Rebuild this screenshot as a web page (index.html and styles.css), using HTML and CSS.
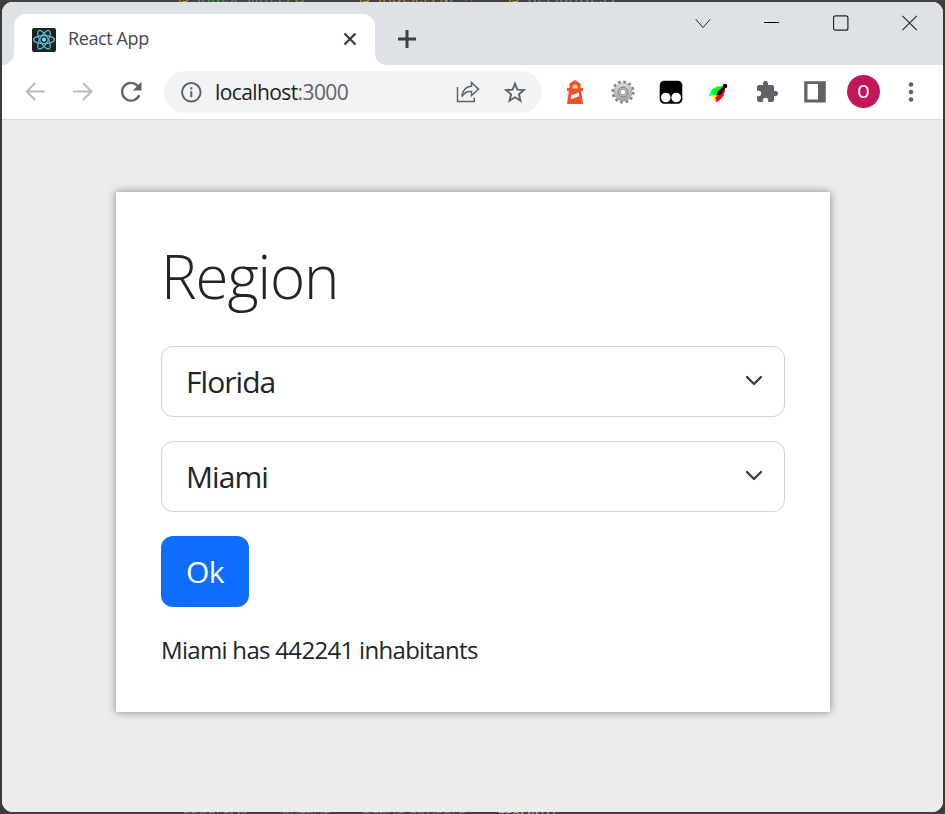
FILE: index.html
```html
<!DOCTYPE html>
<html lang="en">
<head>
<meta charset="utf-8">
<title>React App</title>
<link rel="stylesheet" href="styles.css">
</head>
<body>
<div class="backdrop backdrop-top" aria-hidden="true">
  <span class="peek js">JS</span><span class="peek green">index-slim.js U</span>
  <span class="peek js second">JS</span><span class="peek sand">index.js M</span><span class="peek light">×</span>
  <span class="peek js third">JS</span><span class="peek gray">RegionUE.js</span>
</div>
<div class="window">
  <header class="tabstrip">
    <div class="lead"></div>
    <div class="tab">
      <svg class="favicon" width="24" height="24" viewBox="0 0 24 24"><rect width="24" height="24" rx="2" fill="#222"/><g fill="none" stroke="#58c4dc" stroke-width="1.2"><ellipse cx="12" cy="11.7" rx="10.4" ry="4"/><ellipse cx="12" cy="11.7" rx="10.4" ry="4" transform="rotate(60 12 11.7)"/><ellipse cx="12" cy="11.7" rx="10.4" ry="4" transform="rotate(120 12 11.7)"/></g><circle cx="12" cy="11.7" r="2.1" fill="#61dafb"/></svg>
      <span class="tab-title">React App</span>
      <svg class="tab-close" width="14" height="14" viewBox="0 0 14 14"><path d="M1.5 1.5l11 11M12.5 1.5l-11 11" stroke="#3c4043" stroke-width="2.3"/></svg>
    </div>
    <div class="strip-rest">
      <svg class="plus" width="18" height="18" viewBox="0 0 18 18"><path d="M9 0v18M0 9h18" stroke="#3c4043" stroke-width="3"/></svg>
      <div class="controls">
        <svg width="16" height="16" viewBox="0 0 16 16"><path d="M.7 4.200L8 12.500l7.300-8.300" fill="none" stroke="#222" stroke-width="1"/></svg>
        <svg width="16" height="16" viewBox="0 0 16 16"><path d="M0 7.500h15" stroke="#000" stroke-width="1"/></svg>
        <svg width="16" height="16" viewBox="0 0 16 16"><rect x=".5" y=".8" width="14.400" height="14.400" rx="2" fill="none" stroke="#222" stroke-width="1.200"/></svg>
        <svg width="16" height="16" viewBox="0 0 16 16"><path d="M.4.800l14.400 14.400M14.800.800L.4 15.200" stroke="#222" stroke-width="1.100"/></svg>
      </div>
    </div>
  </header>
  <nav class="toolbar">
    <div class="nav-buttons">
      <svg width="22" height="22" viewBox="0 0 22 22"><path d="M20.700 10.500H3M11.200 2L2.700 10.500l8.500 8.500" fill="none" stroke="#babcbe" stroke-width="2"/></svg>
      <svg width="22" height="22" viewBox="0 0 22 22"><path d="M1 10.500h18M11 2l8.500 8.500L11 19" fill="none" stroke="#babcbe" stroke-width="2"/></svg>
      <svg width="22" height="22" viewBox="0 0 22 22"><path d="M19.200 14.300A8.900 8.900 0 1 1 17.800 5" fill="none" stroke="#5f6368" stroke-width="2.300"/><path d="M21.500.800v8.700h-8.700z" fill="#5f6368"/></svg>
    </div>
    <div class="omnibox">
      <svg width="22" height="22" viewBox="0 0 22 22"><circle cx="11.300" cy="11.300" r="9.300" fill="none" stroke="#5f6368" stroke-width="2"/><path d="M11.300 10.200v6M11.300 6.200v2.200" stroke="#5f6368" stroke-width="2"/></svg>
      <span class="url">localhost<span class="port">:3000</span></span>
      <svg class="share" width="24" height="22" viewBox="0 0 24 22"><g fill="none" stroke="#5f6368" stroke-width="1.500"><path d="M1.500 6v14.500h16.800v-4"/><path d="M15.500 1.500l7 6.600-7 6.400v-4C10.500 10 8 12 5.800 15.500 6.500 9.500 10 5.500 15.500 5.200z"/></g></svg>
      <svg class="star" width="22" height="22" viewBox="0 0 22 22"><path d="M11 2.600l2.400 6 6.500.5-5 4.200 1.600 6.400L11 16.300l-5.500 3.400 1.600-6.400-5-4.200 6.500-.5z" fill="none" stroke="#5f6368" stroke-width="1.900"/></svg>
    </div>
    <div class="extensions">
      <svg width="24" height="24" viewBox="0 0 24 24"><path d="M6.500 3.500L12 0l5.500 3.500V8H20v3h-1.800L20 24H4l1.800-13H4V8h2.500z" fill="#f4512c"/><path d="M9.500 8.500V5.800q2.500-3 5 0v2.700z" fill="#ffe082"/><path d="M8 15.500l8-3v3.800l-8 3z" fill="#fff"/></svg>
      <svg width="24" height="24" viewBox="0 0 24 24"><defs><linearGradient id="metal" x2="0" y2="1"><stop offset="0" stop-color="#dedede"/><stop offset="1" stop-color="#a0a0a0"/></linearGradient></defs><circle cx="12" cy="12" r="10.300" fill="none" stroke="#858585" stroke-width="2.600" stroke-dasharray="2.700 2.693"/><circle cx="12" cy="12" r="9" fill="url(#metal)" stroke="#999" stroke-width=".8"/><circle cx="12" cy="12" r="5" fill="#b5b5b5" stroke="#808080" stroke-width="1"/><circle cx="12" cy="12" r="2.600" fill="#fff" stroke="#888" stroke-width=".6"/></svg>
      <svg width="24" height="24" viewBox="0 0 24 24"><rect x=".7" y=".7" width="22.600" height="23" rx="4.500"/><circle cx="6.800" cy="17.500" r="4.800" fill="#fff"/><circle cx="17.200" cy="17.500" r="4.800" fill="#fff"/></svg>
      <svg width="24" height="24" viewBox="0 0 24 24"><path d="M2 15.500Q4 5 18 6L9 15z" fill="#0f0"/><path d="M2 15.500l2-5 2.500 5z" fill="#0ff"/><path d="M4.500 15H10v5H6.500z" fill="#ff0"/><path d="M8 18L18 7q.5 10-8 15z" fill="red"/><path d="M8 21l3-1.500 1.500.8L9.500 22z" fill="#f0f"/><path d="M9 15.500L11 11l6-5 1 2.500-4.500 6z"/><circle cx="18" cy="6" r="2.300"/></svg>
      <svg width="24" height="24" viewBox="0 0 24 24"><path d="M20.500 11H19V7a2 2 0 0 0-2-2h-4V3.500a2.500 2.500 0 0 0-5 0V5H4a2 2 0 0 0-2 2v3.800h1.500a2.700 2.700 0 0 1 0 5.400H2V20a2 2 0 0 0 2 2h3.800v-1.500a2.700 2.700 0 0 1 5.400 0V22H17a2 2 0 0 0 2-2v-4h1.500a2.500 2.500 0 0 0 0-5z" fill="#5f6368"/></svg>
      <svg width="24" height="24" viewBox="0 0 24 24"><path fill-rule="evenodd" d="M1.200 1.200h21.600v21.300H1.200zM4.500 4v15.500H15V4z" fill="#5f6368"/></svg>
    </div>
    <span class="avatar">O</span>
    <svg class="more" width="6" height="22" viewBox="0 0 6 22"><g fill="#5f6368"><circle cx="3" cy="3.500" r="2.300"/><circle cx="3" cy="11" r="2.300"/><circle cx="3" cy="18.500" r="2.300"/></g></svg>
  </nav>
  <main class="page">
    <section class="card">
      <h1>Region</h1>
      <div class="select"><span>Florida</span><svg width="18" height="11" viewBox="0 0 18 11"><path d="M2 2l7 7 7-7" fill="none" stroke="#343a40" stroke-width="2.300" stroke-linecap="round" stroke-linejoin="round"/></svg></div>
      <div class="select"><span>Miami</span><svg width="18" height="11" viewBox="0 0 18 11"><path d="M2 2l7 7 7-7" fill="none" stroke="#343a40" stroke-width="2.300" stroke-linecap="round" stroke-linejoin="round"/></svg></div>
      <button class="ok" type="button">Ok</button>
      <p class="result">Miami has 442241 inhabitants</p>
    </section>
  </main>
</div>
<div class="backdrop backdrop-bottom" aria-hidden="true">
  <span class="peek">PROBLEMS</span><span class="peek">OUTPUT</span><span class="peek">DEBUG CONSOLE</span><span class="peek light">TERMINAL</span>
</div>
</body>
</html>
```
FILE: styles.css
```css
* { box-sizing: border-box; }
body {
  margin: 0;
  width: 945px;
  height: 814px;
  overflow: hidden;
  background: #3c3b3b;
  font-family: "Open Sans", "Noto Sans", sans-serif;
  color: #212529;
}
svg { display: block; flex: none; }

.backdrop { height: 2px; overflow: hidden; display: flex; white-space: nowrap; background: #434140; }
.peek { font-size: 16px; line-height: 16px; color: #777; flex: none; }
.backdrop-top { padding-left: 178px; }
.backdrop-top .peek { margin-top: -11px; }
.js { width: 19px; color: #b9ac35; font-size: 13px; }
.green { width: 162px; color: #5d9069; }
.sand { width: 86px; color: #a78d68; }
.light { color: #aaa; }
.third { margin-left: 35px; }
.gray { color: #888; }
.backdrop-bottom { padding-left: 183px; gap: 33px; }
.backdrop-bottom .peek { font-size: 12.5px; margin-top: -3px; }

.window { width: 941px; height: 810px; margin: 0 auto; border-radius: 11px; overflow: hidden; background: #fff; display: flex; flex-direction: column; }

.tabstrip { height: 63px; display: flex; background: #fff; }
.lead { width: 12px; background: #dee1e6; border-bottom-right-radius: 12px; }
.tab { width: 361px; padding: 12px 0 0 18px; display: flex; align-items: center; position: relative; isolation: isolate; }
.tab::before { content: ""; position: absolute; z-index: -1; left: 0; right: 0; top: 0; height: 36px; background: #dee1e6; }
.tab::after { content: ""; position: absolute; z-index: -1; inset: 12px 0 0; background: #fff; border-radius: 12px 12px 0 0; }
.tab-title { margin: -3px 0 0 12px; font-size: 18px; letter-spacing: -.4px; color: #45494d; width: 264px; }
.strip-rest { flex: 1; display: flex; background: #dee1e6; border-bottom-left-radius: 12px; padding: 0 25px 0 23px; justify-content: space-between; }
.plus { margin-top: 28px; }
.tab-close { margin: -2px 0 0 11px; }
.controls { display: flex; gap: 53px; padding-top: 13px; }

.toolbar { height: 55px; display: flex; align-items: center; border-bottom: 1px solid #dadce0; flex: none; }
.nav-buttons { display: flex; gap: 26px; margin-left: 22px; }
.omnibox { width: 378px; height: 42px; margin-left: 22px; padding: 0 16px; border-radius: 21px; background: #f1f3f4; display: flex; align-items: center; }
.url { margin: 0 0 0 13px; font-size: 21px; letter-spacing: -.6px; color: #202124; }
.port { color: #5f6368; }
.share { margin-left: auto; }
.star { margin-left: 24px; }
.extensions { display: flex; gap: 24px; margin-left: 21px; }
.avatar { width: 33px; height: 33px; border-radius: 50%; margin: -1px 0 0 20px; background: #c2185b; color: #fff; font: 18px/33px Roboto, sans-serif; text-align: center; }
.more { margin-left: 28px; }

.page { flex: 1; background: #ececec; padding: 72px 0 0 114px; }
.card { width: 714px; height: 520px; padding: 48px 45px 0; background: #fff; box-shadow: 0 0 8px rgba(0, 0, 0, .45); }
h1 { margin: 0 0 34px; font-size: 60px; line-height: 72px; font-weight: 300; letter-spacing: -1.1px; }
.select { height: 71px; margin-bottom: 24px; padding: 0 21px 0 24px; border: 1px solid #ced4da; border-radius: 12px; display: flex; align-items: center; justify-content: space-between; font-size: 30px; letter-spacing: -.95px; }
.select svg { margin-top: -2px; }
.ok { display: block; width: 88px; height: 71px; border: 0; border-radius: 12px; padding: 0; background: #0d6efd; color: #fff; font: 30px/71px "Open Sans", sans-serif; letter-spacing: -.6px; }
.result { margin: 25px 0 0; font-size: 24px; line-height: 36px; letter-spacing: -.69px; }
```
